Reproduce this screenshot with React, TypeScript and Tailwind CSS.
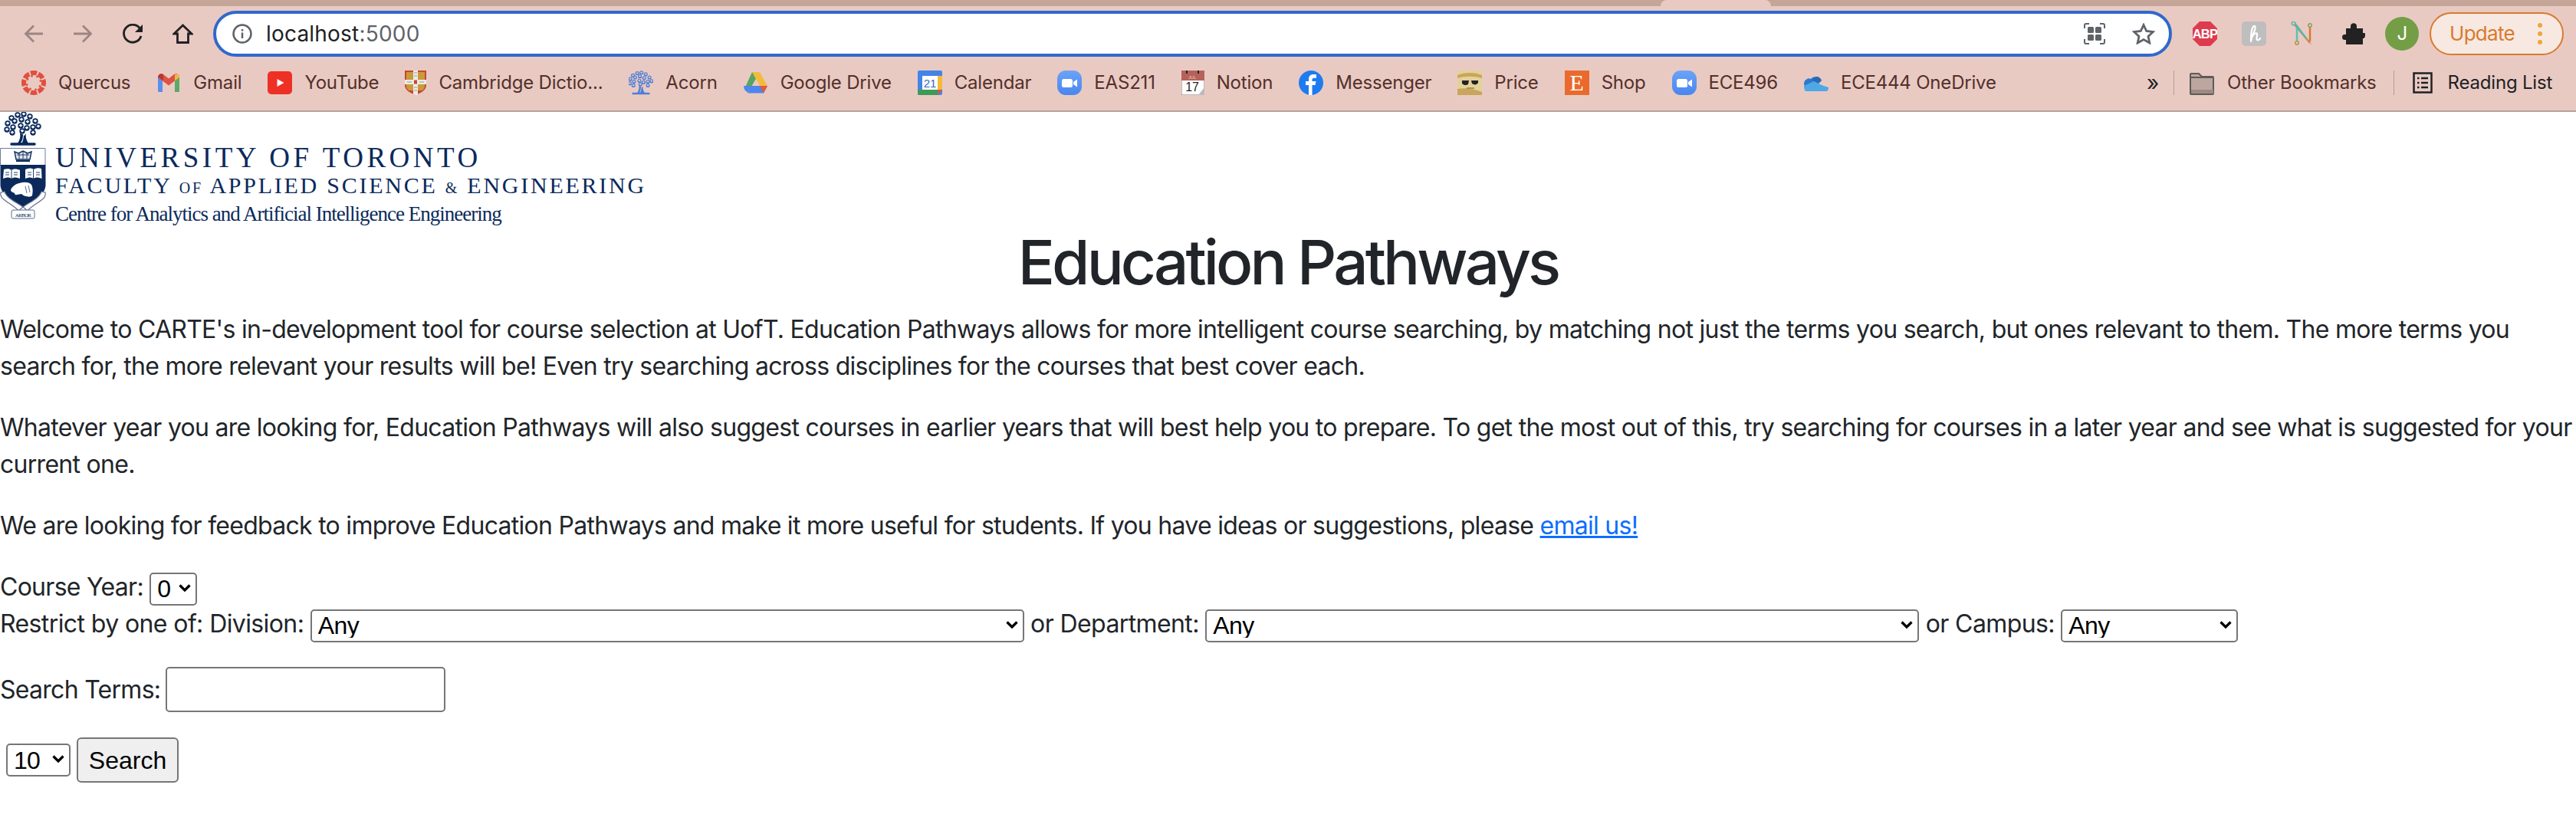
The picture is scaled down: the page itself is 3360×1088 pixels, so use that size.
import { ReactNode } from "react";

const navy = "#0b2a5b";

function Tree({ color, bg }: { color: string; bg: string }) {
  const leaves = [
    [23, 4], [31, 3], [39, 6], [15, 8], [46, 12], [10, 15], [19, 12], [28, 10], [36, 13],
    [50, 19], [43, 20], [9, 23], [17, 20], [27, 18], [35, 21], [16, 27], [43, 27], [29, 25],
  ];
  return (
    <g>
      {leaves.map(([x, y], i) => (
        <g key={i}>
          <circle cx={x} cy={y} r={3.7} fill={color} />
          <path d={`M${x - 2.4} ${y - 0.5}l2.4 -1.800 2.400 1.800 -2.400 2.200z`} fill={bg} />
        </g>
      ))}
      <path d="M26 28c1 4 0 8-3 13h14c-3-5-4-9-3-13l-2 3-3-2-3-1z" fill={color} />
      <path d="M30 30c0 4-1 8-3 10h2c1-3 2-6 2-10z" fill={bg} />
      <path d="M15 42h30" stroke={color} strokeWidth="3.5" strokeLinecap="round" strokeDasharray="3 1.2" />
    </g>
  );
}

function Crest() {
  return (
    <svg width="60" height="142" viewBox="0 0 60 142" className="shrink-0">
      <Tree color={navy} bg="#ffffff" />
      <path d="M.5 47.5h58.5v22H.5z" fill="#fff" stroke="#6f7f9c" />
      <g fill="none" stroke={navy} strokeWidth="1.4">
        <path d="M19 52l5 2 6-3 6 3 5-2-2 10H21z" fill="#dfe4ec" />
        <path d="M21 64h18" strokeWidth="2" />
        <path d="M22 56h16M25 54v7M30 52v9M35 54v7" strokeWidth=".9" />
      </g>
      <path d="M.5 69h59v26c0 12-14 21-29.500 29C15 116 .5 107 .5 95z" fill={navy} />
      <path d="M5 75c4-1 8-1 10 1 2-2 7-2 11 0v11c-4-2-8-2-11 0-3-2-7-2-11 0z" fill="#fff" />
      <path d="M33 75c4-2 8-2 11 0 3-2 7-2 10-1l.5 13c-4-2-8-2-11 0-3-2-7-2-10.500 0z" fill="#fff" />
      <path d="M15 76v11M43.500 75v12M7 79h5M7 82h5M18 79h5M18 82h5M36 79h5M36 82h5M47 79h5M47 82h5" stroke={navy} strokeWidth=".9" />
      <path d="M14 102c1-4 6-8 11-9 6-2 13-2 16 2 2 4 2 9 1 14-1 2-6 2-8 1-3 0-4-2-6-3l-6 1c-2 1-3-1-3-2-2-1-5-2-5-4z" fill="#fff" />
      <path d="M37 96l2 9M33 97l2 9" stroke={navy} strokeWidth=".7" />
      <path d="M1 105c-1 5 2 8 5 10 6 5 13 8 18 14l6-5C20 117 9 113 6 104zM59 105c1 5-2 8-5 10-6 5-13 8-18 14l-6-5c10-7 21-11 24-20z" fill="#fff" stroke="#5f6f90" strokeWidth="1.2" />
      <rect x="15" y="128" width="30" height="11" rx="2" fill="#fff" stroke="#5f6f90" />
      <text x="30" y="136.500" textAnchor="middle" fontSize="7" fontFamily="Liberation Serif, serif" fill={navy}>ARBOR</text>
    </svg>
  );
}

function Quercus() {
  const angles = [0, 45, 90, 135, 180, 225, 270, 315];
  return (
    <svg viewBox="0 0 32 32" className="w-8 h-8">
      {angles.map((a) => (
        <g key={a} transform={`rotate(${a} 16 16)`} fill="#e0503e">
          <path d="M11 .8a16 16 0 0 1 10 0l-2 5.700a9.600 9.600 0 0 0-6 0z" />
          <circle cx="20.500" cy="8" r="1.400" />
        </g>
      ))}
    </svg>
  );
}

function Gmail() {
  return (
    <svg viewBox="0 0 32 32" className="w-8 h-8">
      <path d="M2 28V8l6 4.500V28H3a1 1 0 0 1-1-1z" fill="#5a8ff0" />
      <path d="M24 28V12.500L30 8v19a1 1 0 0 1-1 1z" fill="#5ba868" />
      <path d="M2 9c0-4 4-6 7-4l7 5.500L23 5c3-2 7 0 7 4l-6 4.500-8 6-8-6z" fill="#de5244" />
      <path d="M2 9c0-4 4-6 7-4v8z" fill="#b5392e" />
      <path d="M24 5.500c3-2 6 0 6 3.500l-6 4.500z" fill="#efb93f" />
    </svg>
  );
}

function YouTube() {
  return (
    <svg viewBox="0 0 32 32" className="w-8 h-8">
      <rect x="0" y="1" width="32" height="30" rx="5" fill="#ee3124" />
      <path d="M12.500 11l9 5-9 5z" fill="#fff" />
    </svg>
  );
}

function Cambridge() {
  return (
    <svg viewBox="0 0 28 32" className="w-7 h-8">
      <path d="M0 0h28v19c0 6-6 10-14 13C6 29 0 25 0 19z" fill="#c9472f" />
      <path d="M2 2h9v10H2zM17 2h9v10h-9zM2 18h9v8H5c-2-2-3-4-3-6zM17 18h9v2c0 2-1 4-3 6h-6z" fill="#c99a3a" />
      <path d="M11 0h6v32h-3l-3-1z" fill="#eceae6" />
      <path d="M0 12h28v6H0z" fill="#eceae6" />
      <rect x="12" y="12.500" width="4" height="5" fill="#c9472f" />
      <path d="M12 3h4M12 7h4M12 22h4M12 26h4M3 15h6M19 15h6" stroke="#9a9a9a" strokeWidth="1.200" />
    </svg>
  );
}

function Acorn() {
  return (
    <svg viewBox="7 -1 46 46" className="w-8 h-8">
      <Tree color="#4f7fd6" bg="#e9cac3" />
    </svg>
  );
}

function Drive() {
  return (
    <svg viewBox="0 0 32 28" className="w-8 h-7">
      <path d="M11 0h10l-7.500 13L8 23 1 22z" fill="#57a55f" />
      <path d="M11 0h10l10 18H21z" fill="#f3bb3e" />
      <path d="M7.500 18H31l-5 9.500H6z" fill="#4d86ec" />
      <path d="M0 18h7.500L6 27.500 1 23z" fill="#4d86ec" />
      <path d="M31 18l-5 9.500L21 18z" fill="#dd5b3e" />
    </svg>
  );
}

function CalendarIcon() {
  return (
    <svg viewBox="0 0 32 32" className="w-8 h-8">
      <rect width="32" height="32" rx="2" fill="#4285e6" />
      <rect x="6" y="7" width="20" height="18" fill="#fff" />
      <path d="M26 7h6v18h-6z" fill="#f4bb3a" />
      <path d="M0 25h26v7H2a2 2 0 0 1-2-2z" fill="#3f9a55" />
      <path d="M26 25h6l-6 7z" fill="#dd5144" />
      <text x="16" y="22" textAnchor="middle" fontSize="15" fontFamily="Liberation Sans, sans-serif" fill="#3367c9">21</text>
    </svg>
  );
}

function Zoom() {
  return (
    <svg viewBox="0 0 32 32" className="w-8 h-8">
      <defs>
        <linearGradient id="zoomBg" x1="0" y1="0" x2="0" y2="1">
          <stop offset="0" stopColor="#6ba3f7" />
          <stop offset="1" stopColor="#4a86ef" />
        </linearGradient>
      </defs>
      <rect width="32" height="32" rx="11" fill="url(#zoomBg)" />
      <rect x="6" y="11" width="14" height="11" rx="2.500" fill="#fff" />
      <path d="M21 15l5-3.500v10L21 18z" fill="#fff" />
    </svg>
  );
}

function Notion() {
  return (
    <svg viewBox="0 0 30 32" className="w-[30px] h-8">
      <rect width="30" height="32" rx="1" fill="#fff" stroke="#777" />
      <rect width="30" height="13" fill="#b5625a" />
      <path d="M7 0v4M22 0v4" stroke="#222" strokeWidth="2" />
      <text x="9" y="10.500" fontSize="6" fontFamily="Liberation Sans, sans-serif" fill="#e8c9c4">JUL</text>
      <text x="14" y="27" textAnchor="middle" fontSize="16" fontFamily="Liberation Sans, sans-serif" fill="#222">17</text>
      <path d="M30 22L22 32h8z" fill="#bbb" />
    </svg>
  );
}

function Facebook() {
  return (
    <svg viewBox="0 0 32 32" className="w-8 h-8">
      <circle cx="16" cy="16" r="16" fill="#1f7cf0" />
      <path d="M13 32V19H9v-5h4v-3c0-4 3-6 6-6l4 .3v4.500h-3c-2 0-2.500 1-2.500 2.500V14h5l-1 5h-4v13z" fill="#fff" />
    </svg>
  );
}

function Price() {
  return (
    <svg viewBox="0 0 32 32" className="w-8 h-8">
      <rect width="32" height="32" fill="#e4d199" />
      <path d="M0 6c10-4 22-4 32 0v4C22 7 10 7 0 10zM0 24c10-2 22 0 32 4v4H0z" fill="#c9a65c" />
      <path d="M6 13h9l-1 5c-3 2-6 1-8-1zM18 13h9v3c-2 3-5 3-8 1z" fill="#222" />
      <path d="M12 23h10" stroke="#9a8148" strokeWidth="1.500" />
    </svg>
  );
}

function Etsy() {
  return (
    <div className="w-8 h-8 bg-[#e96a2c] flex items-center justify-center text-white text-[30px] leading-none font-['Liberation_Serif',serif]">
      E
    </div>
  );
}

function OneDrive() {
  return (
    <svg viewBox="0 0 32 32" className="w-8 h-8">
      <path d="M16 8c3 0 6 2 7 5l-8 9H4c-3-1-4-3-4-5 0-3 2-5 4-6 2-1 3-1 5 0 1-2 4-3 7-3z" fill="#2f79c9" />
      <path d="M10 12l6-4c3 0 6 2 7 5l-6 3z" fill="#2b69b3" />
      <path d="M2 27c-2-2-2-5-2-7l13-6 10 5 9 3c0 3-1 5-3 5z" fill="#4fa8e6" />
    </svg>
  );
}

function Folder() {
  return (
    <svg viewBox="0 0 32 32" className="w-8 h-8">
      <path d="M1 5a1 1 0 0 1 1-1h10l4 4h14a1 1 0 0 1 1 1v21a1 1 0 0 1-1 1H2a1 1 0 0 1-1-1z" fill="#bca69f" stroke="#5f5a58" strokeWidth="2" />
      <path d="M2 9h29" stroke="#5f5a58" strokeWidth="2" />
      <path d="M2 25h29v5H2z" fill="#9d8a84" />
    </svg>
  );
}

function ReadingList() {
  return (
    <svg viewBox="0 0 26 28" className="w-[26px] h-7" fill="none" stroke="#202124" strokeWidth="2.500">
      <rect x="1.500" y="1.500" width="23" height="25" />
      <path d="M11 8h9M11 14h9M11 20h9M6 8h2.500M6 14h2.500M6 20h2.500" />
    </svg>
  );
}

const bookmarks: { icon: ReactNode; label: string }[] = [
  { icon: <Quercus />, label: "Quercus" },
  { icon: <Gmail />, label: "Gmail" },
  { icon: <YouTube />, label: "YouTube" },
  { icon: <Cambridge />, label: "Cambridge Dictio..." },
  { icon: <Acorn />, label: "Acorn" },
  { icon: <Drive />, label: "Google Drive" },
  { icon: <CalendarIcon />, label: "Calendar" },
  { icon: <Zoom />, label: "EAS211" },
  { icon: <Notion />, label: "Notion" },
  { icon: <Facebook />, label: "Messenger" },
  { icon: <Price />, label: "Price" },
  { icon: <Etsy />, label: "Shop" },
  { icon: <Zoom />, label: "ECE496" },
  { icon: <OneDrive />, label: "ECE444 OneDrive" },
];

function TabStrip() {
  return (
    <div className="h-2 bg-[#c5a598] flex justify-end pr-[1050px]">
      <div className="w-[144px] h-2 bg-[#e9cac3] rounded-t-[8px]" />
    </div>
  );
}

function Toolbar() {
  return (
    <div className="h-[72px] flex items-start pl-[31px] pt-[6px]">
      <div className="flex items-center h-[60px] w-[247px] shrink-0 gap-[38px]">
        <svg viewBox="0 0 26 24" className="w-[26px] h-6" fill="none" stroke="#9c8681" strokeWidth="2.800">
          <path d="M25 12H3M13 1.500L2.500 12 13 22.500" />
        </svg>
        <svg viewBox="0 0 26 24" className="w-[26px] h-6" fill="none" stroke="#9c8681" strokeWidth="2.800">
          <path d="M1 12h22M13 1.500L23.500 12 13 22.500" />
        </svg>
        <svg viewBox="0 0 28 26" className="w-7 h-[26px]" fill="none">
          <path d="M24 7A11.500 11.500 0 1 0 25 16" stroke="#202124" strokeWidth="2.800" />
          <path d="M27 1v10H17z" fill="#202124" />
        </svg>
        <svg viewBox="0 0 27 26" className="w-[27px] h-[26px]" fill="none" stroke="#202124" strokeWidth="2.800">
          <path d="M13.500 2L2 13h4.500v11.500h14V13H25z" />
        </svg>
      </div>
      <div className="w-[2555px] h-[60px] shrink-0 bg-white border-4 border-[#3069cc] rounded-[30px] flex items-center pl-[21px] pr-[18px]">
        <svg viewBox="0 0 26 26" className="w-[26px] h-[26px]" fill="none" stroke="#5f6368" strokeWidth="2.500">
          <circle cx="13" cy="13" r="11.500" />
          <path d="M13 11.500V19M13 7v2.500" />
        </svg>
        <span className="ml-[18px] text-[28px] leading-none text-[#202124] font-['Inter',sans-serif] tracking-[0.2px]">
          localhost<span className="text-[#5f6368]">:5000</span>
        </span>
        <div className="ml-auto flex items-center gap-[35px]">
          <svg viewBox="0 0 28 28" className="w-7 h-7" fill="none" stroke="#5f6368" strokeWidth="2">
            <path d="M1 7V3a2 2 0 0 1 2-2h4M21 1h4a2 2 0 0 1 2 2v4M27 21v4a2 2 0 0 1-2 2h-4M7 27H3a2 2 0 0 1-2-2v-4" />
            <g fill="#5f6368" stroke="none">
              <rect x="5" y="5" width="8" height="8" rx="1.500" />
              <rect x="15" y="5" width="8" height="8" rx="1.500" />
              <rect x="5" y="15" width="8" height="8" rx="1.500" />
              <rect x="15" y="15" width="8" height="8" rx="1.500" />
            </g>
          </svg>
          <svg viewBox="0 0 30 28" className="w-[30px] h-7" fill="none" stroke="#5f6368" strokeWidth="2.800">
            <path d="M15 2.500l3.700 8 8.800 1-6.500 6 1.800 8.500-7.800-4.400-7.800 4.400L9 17.500l-6.500-6 8.800-1z" />
          </svg>
        </div>
      </div>
      <div className="ml-[27px] flex items-center h-[60px] shrink-0">
        <svg viewBox="0 0 32 32" className="w-8 h-8">
          <path d="M9 0h14l9 9v14l-9 9H9l-9-9V9z" fill="#de3b4f" />
          <text x="16" y="22" textAnchor="middle" fontSize="16.500" fontWeight="700" fontFamily="Liberation Sans, sans-serif" fill="#fff">ABP</text>
        </svg>
        <svg viewBox="0 0 32 32" className="w-8 h-8 ml-[32px]">
          <rect width="32" height="32" rx="5" fill="#bebebe" />
          <path d="M12 26C13 18 20 8 17 6 14 5 12 12 12 26M12.500 22C15 16 19 14 20 16 21 19 18 22 20 24 21 25 23 24 24 22" fill="none" stroke="#fff" strokeWidth="2.200" strokeLinecap="round" />
        </svg>
        <svg viewBox="0 0 32 32" className="w-8 h-8 ml-[32px]" fill="none">
          <path d="M3 3l24 27" stroke="#e9a89a" strokeWidth="1.500" />
          <path d="M4 3l21 25-3-3" stroke="#c98a4a" strokeWidth="2" />
          <path d="M5 2l15 20" stroke="#5bb5ac" strokeWidth="2.500" />
          <path d="M8 8v19" stroke="#5bc0b6" strokeWidth="2.500" />
          <path d="M25 5v21" stroke="#d97a2e" strokeWidth="2.500" />
          <circle cx="3.500" cy="2.500" r="2.200" fill="#e9cac3" stroke="#5bb5ac" strokeWidth="1.500" />
          <circle cx="25" cy="5" r="2.200" fill="#e9cac3" stroke="#8aa06a" strokeWidth="1.500" />
          <circle cx="8" cy="28" r="2.200" fill="#e9cac3" stroke="#b8924a" strokeWidth="1.500" />
        </svg>
        <svg viewBox="0 0 30 28" className="w-[30px] h-7 ml-[35px]">
          <path d="M11 4c0-5 8-5 8 0v3h8v6h2c2 0 1 7-1 7h-1v8H5v-6H3c-4 0-4-7 0-7h2V7h6z" fill="#222222" />
        </svg>
        <div className="ml-[26px] w-11 h-11 rounded-full bg-[#739e46] text-white flex items-center justify-center text-[24px] font-['Inter',sans-serif]">
          J
        </div>
        <div className="ml-[14px] w-[175px] h-14 rounded-[28px] border-2 border-[#d97a2e] bg-[#f7e9e1] flex items-center pl-[24px] font-['Inter',sans-serif] text-[26px] text-[#d97a2e]">
          Update
          <span className="ml-[30px] flex flex-col gap-[5px]">
            <span className="w-[6px] h-[6px] rounded-full bg-[#efa53c]" />
            <span className="w-[6px] h-[6px] rounded-full bg-[#efa53c]" />
            <span className="w-[6px] h-[6px] rounded-full bg-[#efa53c]" />
          </span>
        </div>
      </div>
    </div>
  );
}

function BookmarksBar() {
  return (
    <div className="h-[66px] border-b-2 border-[#b9a29d] pb-[8px] flex items-center pl-[28px] text-[24px] text-[#53302a] font-['Inter',sans-serif] tracking-[-0.2px]">
      <div className="flex items-center gap-[34px] w-[2772px] shrink-0">
        {bookmarks.map((b) => (
          <div key={b.label} className="flex items-center gap-4 shrink-0 whitespace-nowrap">
            {b.icon}
            <span>{b.label}</span>
          </div>
        ))}
      </div>
      <span className="w-[35px] text-[28px] leading-none text-[#202124]">»</span>
      <div className="w-px h-8 bg-[#b39c96]" />
      <div className="ml-[20px] flex items-center gap-[17px]">
        <Folder />
        <span>Other Bookmarks</span>
      </div>
      <div className="ml-[22px] w-px h-8 bg-[#b39c96]" />
      <div className="ml-[24px] flex items-center gap-[20px] text-[#202124]">
        <ReadingList />
        <span>Reading List</span>
      </div>
    </div>
  );
}

function Logo() {
  return (
    <div className="h-[148px] flex items-start">
      <Crest />
      <div className="ml-[12px] pt-[42px] text-[#0b2a5b] font-['Liberation_Serif',serif] whitespace-nowrap">
        <div className="text-[37px] leading-[36px] tracking-[4.500px]">UNIVERSITY OF TORONTO</div>
        <div className="text-[30px] leading-[36px] tracking-[2.750px]">
          FACULTY <span className="text-[20px]">OF</span> APPLIED SCIENCE <span className="text-[20px]">&amp;</span> ENGINEERING
        </div>
        <div className="text-[27px] leading-[32px] tracking-[-1px]">Centre for Analytics and Artificial Intelligence Engineering</div>
      </div>
    </div>
  );
}

function Chevron({ className }: { className: string }) {
  return (
    <svg viewBox="0 0 16 10" className={className} fill="none" stroke="#000" strokeWidth="3.200">
      <path d="M1.500 1.500L8 8l6.500-6.500" />
    </svg>
  );
}

function Select({ width, height, value }: { width: string; height: string; value: string }) {
  return (
    <span className={`relative inline-block align-middle ${width} ${height}`}>
      <select className="appearance-none block w-full h-full pl-[8px] bg-white border-2 border-[#767676] rounded-[5px] text-[32px] leading-none text-black font-['Liberation_Sans',sans-serif]">
        <option>{value}</option>
      </select>
      <Chevron className="absolute right-[8px] top-[15px] w-4 h-[10px] pointer-events-none" />
    </span>
  );
}

export default function App() {
  return (
    <div className="min-h-screen w-[3360px] overflow-hidden bg-white text-[32px] leading-[48px] text-[#212529] font-['Inter',sans-serif] tracking-[-0.72px]">
      <div className="bg-[#e9cac3]">
        <TabStrip />
        <Toolbar />
        <BookmarksBar />
      </div>
      <Logo />
      <h1 className="text-[80px] leading-[96px] font-[550] text-center mb-4 tracking-[-3.900px]">Education Pathways</h1>
      <div className="whitespace-nowrap">
        <p className="mb-8">
          Welcome to CARTE's in-development tool for course selection at UofT. Education Pathways allows for more intelligent course searching, by matching not just the terms you search, but ones relevant to them. The more terms you
          <br />
          search for, the more relevant your results will be! Even try searching across disciplines for the courses that best cover each.
        </p>
        <p className="mb-8">
          Whatever year you are looking for, Education Pathways will also suggest courses in earlier years that will best help you to prepare. To get the most out of this, try searching for courses in a later year and see what is suggested for your
          <br />
          current one.
        </p>
        <p className="mb-8">
          We are looking for feedback to improve Education Pathways and make it more useful for students. If you have ideas or suggestions, please{" "}
          <a href="#" className="text-[#0d6efd] underline">email us!</a>
        </p>
        <div>
          Course Year: <Select width="w-[62px]" height="h-[43px]" value="0" />
        </div>
        <div className="tracking-[-0.6px]">
          Restrict by one of: Division: <Select width="w-[931px]" height="h-[43px]" value="Any" /> or Department:{" "}
          <Select width="w-[931px]" height="h-[43px]" value="Any" /> or Campus: <Select width="w-[231px]" height="h-[43px]" value="Any" />
        </div>
        <div className="mt-[32px] h-[59px] flex items-center">
          Search Terms:
          <input type="text" className="ml-[7px] w-[365px] h-[59px] bg-white border-2 border-[#767676] rounded-[5px]" />
        </div>
        <div className="mt-[33px] pl-[8px] flex items-center">
          <Select width="w-[84px]" height="h-[43px]" value="10" />
          <button className="ml-[8px] w-[133px] h-[59px] bg-[#efefef] border-2 border-[#767676] rounded-[6px] text-[32px] tracking-normal text-black font-['Liberation_Sans',sans-serif]">
            Search
          </button>
        </div>
      </div>
    </div>
  );
}
